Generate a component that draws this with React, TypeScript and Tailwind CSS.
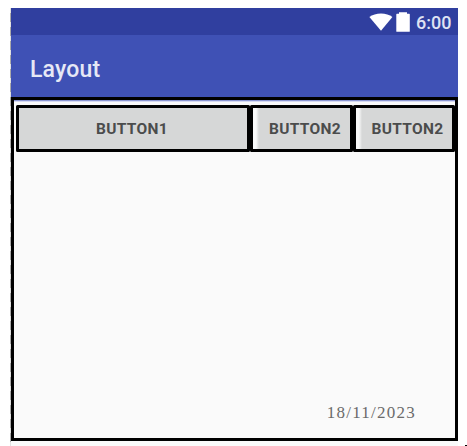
function StatusBar() {
  return (
    <div className="flex h-[27px] items-center justify-end bg-[#303f9f] pr-[6px]">
      <svg className="h-[18px] w-[24px]" viewBox="0 0 24 18" fill="#fff">
        <path d="M0.4 4C6 -.7 18 -.7 23.4 4L12 17.8Z" />
      </svg>
      <svg className="ml-[3px] h-[20px] w-[14px]" viewBox="0 0 14 20" fill="#fff">
        <path d="M3 0.2h8v1.6h2.2q.6 0 .6.6V19.2q0 .6-.6.6H.9q-.6 0-.6-.6V2.4q0-.6.6-.6H3Z" />
      </svg>
      <span className="ml-[6px] w-[36px] pt-[2px] text-[18px] font-medium leading-[20px] text-[#dfe2f3]">
        6:00
      </span>
    </div>
  );
}

function LayoutButton({ label, className }: { label: string; className: string }) {
  return (
    <button
      className={
        "h-[47px] shrink-0 rounded-[1.5px] border-[3px] border-black pt-px text-center text-[15.5px] font-bold leading-[40px] tracking-[0.3px] text-[#4b4c4c] " +
        className
      }
    >
      {label}
    </button>
  );
}

export default function App() {
  return (
    <div className="flex h-[446px] w-[467px] overflow-hidden bg-white font-['Roboto',sans-serif]">
      <div className="flex w-[11px] justify-end pt-[8px]">
        <div className="h-full w-px bg-[repeating-linear-gradient(to_bottom,#e2e2e2_0px,#e2e2e2_5px,#aaa_5px,#aaa_14px)]" />
      </div>
      <div className="flex w-[447px] flex-col pt-[8px]">
        <StatusBar />
        <div className="flex h-[62px] items-center bg-[#3f51b5] pl-[19px]">
          <span className="pt-[7px] text-[23px] font-medium leading-[26px] tracking-[0.2px] text-[#e6e8f5]">
            Layout
          </span>
        </div>
        <div className="flex h-[344px] flex-col border-[3px] border-black bg-[#fafafa]">
          <div className="h-px bg-[#8b96d2]" />
          <div className="h-px bg-[#d5d9f1]" />
          <div className="flex bg-[#fafafa] pl-[2px] pt-[3px]">
            <LayoutButton label="BUTTON1" className="w-[234px] bg-[#d6d7d7] pr-[2px]" />
            <LayoutButton
              label="BUTTON2"
              className="w-[103px] bg-[linear-gradient(to_right,#fafafa_3px,#d6d7d7_6px)] pl-[7px]"
            />
            <LayoutButton
              label="BUTTON2"
              className="w-[102px] bg-[linear-gradient(to_right,#fafafa_3px,#d6d7d7_6px)] pl-[7px]"
            />
          </div>
          <div className="flex flex-1 items-end justify-end pb-[15px] pr-[39px] font-['Liberation_Serif',serif] text-[17px] leading-[20px] tracking-[1.25px] text-[#6b6b6b]">
            18/11/2023
          </div>
        </div>
        <div className="flex-1 bg-[#fafafa]" />
      </div>
      <div className="flex flex-1 items-end justify-end">
        <div className="h-px w-[2px] bg-black" />
      </div>
    </div>
  );
}
